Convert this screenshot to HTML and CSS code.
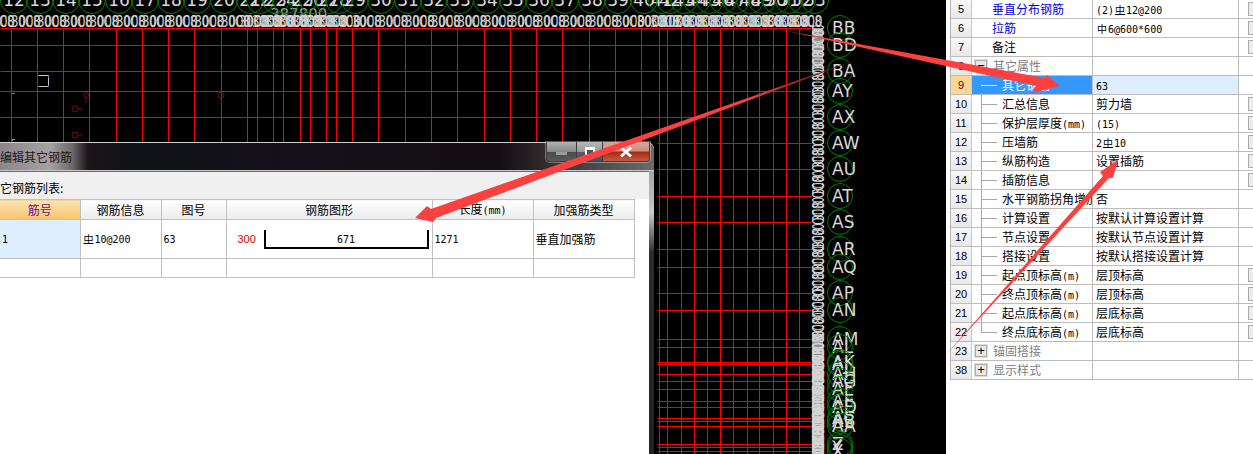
FILE: index.html
```html
<!DOCTYPE html>
<html lang="zh-CN">
<head>
  <meta charset="UTF-8">
  <title>编辑其它钢筋</title>
  <link rel="stylesheet" href="styles.css">
</head>
<body>
  <div class="screen">
    <div class="cad">
      <svg class="cad-drawing" id="drawing" width="946" height="454" xmlns="http://www.w3.org/2000/svg">
        <text class="dim-total" x="270" y="20">387800</text>
        <g id="axes"></g>
        <g fill="none" stroke="#7a0d0d">
          <circle cx="86" cy="95" r="2.5"/><path d="M86 98v5"/>
          <circle cx="221" cy="95" r="3"/><path d="M221 98v5"/>
          <circle cx="75" cy="109" r="3"/><path d="M78 109h5"/>
          <circle cx="75" cy="135" r="3"/><path d="M78 135h5"/>
        </g>
        <path d="M38.5 75.5h10v11h-10" fill="none" stroke="#c8c8c8"/>
        <path d="M48 76h1v2h-1zM48 85h1v2h-1zM12 93h3v1h-3z" fill="#8a5cf0"/>
        <path d="M12 139h3v1h-3zM12 139h1v2h-1z" fill="#999"/>
      </svg>

      <section class="dialog">
        <div class="dialog-title">
          <span class="dialog-name">编辑其它钢筋</span>
          <div class="window-btns">
            <span class="win-btn win-min"><i></i></span>
            <span class="win-btn win-max"><i></i></span>
            <span class="win-btn win-close">
              <svg width="14" height="12" viewBox="0 0 14 12"><path d="M2 1.5l10 9M12 1.5l-10 9" stroke="#fff" stroke-width="3"/></svg>
            </span>
          </div>
        </div>
        <div class="dialog-body">
          <p class="list-label">它钢筋列表:</p>
          <table class="rebar-table">
            <colgroup>
              <col class="col-no"><col class="col-info"><col class="col-fig"><col class="col-shape"><col class="col-len"><col class="col-type">
            </colgroup>
            <thead>
              <tr>
                <th class="th-active">筋号</th>
                <th>钢筋信息</th>
                <th>图号</th>
                <th>钢筋图形</th>
                <th>长度<span class="latin">(mm)</span></th>
                <th>加强筋类型</th>
              </tr>
            </thead>
            <tbody>
              <tr class="row-main">
                <td class="td-active"><span class="latin">1</span></td>
                <td><span class="bar-mark bar-grade3">中</span><span class="latin">10@200</span></td>
                <td><span class="latin">63</span></td>
                <td>
                  <div class="shape-cell">
                    <span class="shape-side">300</span>
                    <span class="shape-bar"><span class="latin">671</span></span>
                  </div>
                </td>
                <td><span class="latin">1271</span></td>
                <td>垂直加强筋</td>
              </tr>
              <tr class="row-empty"><td></td><td></td><td></td><td></td><td></td><td></td></tr>
            </tbody>
          </table>
        </div>
      </section>
    </div>

    <aside class="panel">
      <div class="props">
        <div class="prop">
          <span class="p-num">5</span><span class="p-name link">垂直分布钢筋</span>
          <span class="p-val"><span class="latin">(2)</span><span class="bar-mark bar-grade3">中</span><span class="latin">12@200</span></span><span class="p-btn"><i></i></span>
        </div>
        <div class="prop">
          <span class="p-num">6</span><span class="p-name link">拉筋</span>
          <span class="p-val"><span class="bar-mark">中</span><span class="latin">6@600*600</span></span><span class="p-btn"><i></i></span>
        </div>
        <div class="prop">
          <span class="p-num">7</span><span class="p-name">备注</span>
          <span class="p-val"></span><span class="p-btn"><i></i></span>
        </div>
        <div class="prop">
          <span class="p-num">8</span><span class="p-name group"><b class="toggle">−</b>其它属性</span>
          <span class="p-val"></span><span class="p-btn"></span>
        </div>
        <div class="prop prop-selected">
          <span class="p-num">9</span><span class="p-name leaf">其它钢筋</span>
          <span class="p-val"><span class="latin">63</span></span><span class="p-btn"></span>
        </div>
        <div class="prop">
          <span class="p-num">10</span><span class="p-name leaf">汇总信息</span>
          <span class="p-val">剪力墙</span><span class="p-btn"><i></i></span>
        </div>
        <div class="prop">
          <span class="p-num">11</span><span class="p-name leaf">保护层厚度<span class="latin">(mm)</span></span>
          <span class="p-val"><span class="latin">(15)</span></span><span class="p-btn"><i></i></span>
        </div>
        <div class="prop">
          <span class="p-num">12</span><span class="p-name leaf">压墙筋</span>
          <span class="p-val"><span class="latin">2</span><span class="bar-mark bar-grade3">中</span><span class="latin">10</span></span><span class="p-btn"><i></i></span>
        </div>
        <div class="prop">
          <span class="p-num">13</span><span class="p-name leaf">纵筋构造</span>
          <span class="p-val">设置插筋</span><span class="p-btn"><i></i></span>
        </div>
        <div class="prop">
          <span class="p-num">14</span><span class="p-name leaf">插筋信息</span>
          <span class="p-val"></span><span class="p-btn"><i></i></span>
        </div>
        <div class="prop">
          <span class="p-num">15</span><span class="p-name leaf">水平钢筋拐角增加</span>
          <span class="p-val">否</span><span class="p-btn"></span>
        </div>
        <div class="prop">
          <span class="p-num">16</span><span class="p-name leaf">计算设置</span>
          <span class="p-val">按默认计算设置计算</span><span class="p-btn"></span>
        </div>
        <div class="prop">
          <span class="p-num">17</span><span class="p-name leaf">节点设置</span>
          <span class="p-val">按默认节点设置计算</span><span class="p-btn"></span>
        </div>
        <div class="prop">
          <span class="p-num">18</span><span class="p-name leaf">搭接设置</span>
          <span class="p-val">按默认搭接设置计算</span><span class="p-btn"></span>
        </div>
        <div class="prop">
          <span class="p-num">19</span><span class="p-name leaf">起点顶标高<span class="latin">(m)</span></span>
          <span class="p-val">层顶标高</span><span class="p-btn"><i></i></span>
        </div>
        <div class="prop">
          <span class="p-num">20</span><span class="p-name leaf">终点顶标高<span class="latin">(m)</span></span>
          <span class="p-val">层顶标高</span><span class="p-btn"><i></i></span>
        </div>
        <div class="prop">
          <span class="p-num">21</span><span class="p-name leaf">起点底标高<span class="latin">(m)</span></span>
          <span class="p-val">层底标高</span><span class="p-btn"><i></i></span>
        </div>
        <div class="prop">
          <span class="p-num">22</span><span class="p-name leaf leaf-last">终点底标高<span class="latin">(m)</span></span>
          <span class="p-val">层底标高</span><span class="p-btn"><i></i></span>
        </div>
        <div class="prop">
          <span class="p-num">23</span><span class="p-name group"><b class="toggle">+</b>锚固搭接</span>
          <span class="p-val"></span><span class="p-btn"></span>
        </div>
        <div class="prop">
          <span class="p-num">38</span><span class="p-name group"><b class="toggle">+</b>显示样式</span>
          <span class="p-val"></span><span class="p-btn"></span>
        </div>
      </div>
    </aside>

    <!-- red arrows drawn on top of the screenshot -->
    <svg class="arrows" width="1253" height="454" xmlns="http://www.w3.org/2000/svg">
      <defs>
        <linearGradient id="fade" gradientUnits="userSpaceOnUse" x1="867" y1="56" x2="740" y2="100">
          <stop offset="0" stop-color="#3a0808"/>
          <stop offset="1" stop-color="#fb4040"/>
        </linearGradient>
      </defs>
      <polygon fill="#fb4040" points="787,31 1045,78 1047,75 1060,86 1032,93 1036,86"/>
      <polygon fill="url(#fade)" points="867,56 431,209 427,206 415,218 433,222 436,218"/>
      <polygon fill="#fb4040" points="943,358 1103,176 1100,172 1118,160 1113,178 1109,178"/>
    </svg>
  </div>
  <script src="canvas.js"></script>
</body>
</html>
```

FILE: styles.css
```css
html, body {
  margin: 0;
  padding: 0;
  background: #000;
}

body {
  font-family: "Noto Sans CJK SC", "Liberation Sans", sans-serif;
  font-size: 12px;
  color: #000;
}

.screen {
  position: relative;
  display: flex;
  width: 1253px;
  height: 454px;
  overflow: hidden;
}

.latin {
  font-family: "DejaVu Sans Mono", monospace;
  font-size: 10px;
}

/* bar grade mark */
.bar-mark {
  display: inline-block;
  width: 12px;
  font-size: 10px;
  text-align: center;
}

.bar-grade3 {
  text-decoration: underline;
  text-underline-offset: 0;
}

/* drawing area */
.cad {
  position: relative;
  flex: 0 0 946px;
  background: #000;
}

.cad-drawing {
  display: block;
}

.cad-drawing text {
  font-family: "DejaVu Sans", sans-serif;
}

.axis-no {
  font-size: 17px;
  fill: #d8d8d8;
}

.axis-letter {
  font-size: 17px;
  fill: #d8d8d8;
}

.dim {
  font-size: 16px;
  fill: #d4d4d4;
}

.dim-total {
  font-size: 15px;
  fill: #a0a0a0;
}

/* dialog window */
.dialog {
  position: absolute;
  left: 0;
  top: 142px;
  display: flex;
  flex-direction: column;
  width: 654px;
  height: 312px;
  background: linear-gradient(#8d8d8d 0, #c8c8c8 70px, #2c2c2c 110px, #222 100%);
  border-top: 1px solid #d0d0d0;
  border-radius: 0 7px 0 0;
  box-sizing: border-box;
}

.dialog-title {
  position: relative;
  flex: 0 0 27px;
  box-sizing: border-box;
  display: flex;
  align-items: center;
  background: linear-gradient(90deg, #8c8688 0, #a5a0a2 50px, #6d686a 72px, #1d1519 88px, #0e1116 130px, #15101a 300px, #140d12 500px, #3a3537 560px, #6b6b6b 654px);
  border-bottom: 1px solid #c9c9c9;
  border-radius: 0 7px 0 0;
}

.dialog-name {
  color: #1a1a1a;
  line-height: 27px;
}

.window-btns {
  position: absolute;
  top: -1px;
  right: 4px;
  display: flex;
  height: 19px;
  border: 1px solid #3e3e3e;
  border-top: 0;
  border-radius: 0 0 4px 4px;
  overflow: hidden;
  box-shadow: 0 0 0 1px rgba(255, 255, 255, 0.35);
}

.win-btn {
  display: flex;
  align-items: center;
  justify-content: center;
  box-sizing: border-box;
  height: 100%;
  border-left: 1px solid #3e3e3e;
}

.win-btn:first-child {
  border-left: 0;
}

.win-min {
  width: 29px;
  background: linear-gradient(#b2b2b2, #8a8a8a 50%, #4a4a4a 55%, #5a5a5a);
}

.win-min i {
  display: block;
  width: 11px;
  height: 3px;
  margin-top: 4px;
  background: #9a9a9a;
}

.win-max {
  width: 26px;
  background: linear-gradient(#b8b8b8, #9a9a9a 50%, #555a66 55%, #4c5260);
}

.win-max i {
  display: block;
  box-sizing: border-box;
  width: 10px;
  height: 10px;
  border: 2px solid #fff;
  border-top-width: 3px;
  background: #555;
}

.win-close {
  width: 47px;
  background: linear-gradient(#d8a49c, #cc8f80 45%, #a82c14 55%, #c45a44);
}

.dialog-body {
  flex: none;
  width: 649px;
  height: 400px;
  background: #fff;
  border-top: 1px solid #6a6a6a;
  box-sizing: border-box;
}

.list-label {
  margin: 0;
  height: 27px;
  line-height: 32px;
  background: #f0f0f0;
  white-space: nowrap;
}

.rebar-table {
  table-layout: fixed;
  width: 634px;
  border-collapse: collapse;
  background: #fff;
}

.col-no { width: 80px; }
.col-info { width: 81px; }
.col-fig { width: 65px; }
.col-shape { width: 206px; }
.col-len { width: 101px; }
.col-type { width: 101px; }

.rebar-table th,
.rebar-table td {
  padding: 0;
  border: 1px solid #c0c0c0;
  line-height: 16px;
  white-space: nowrap;
  overflow: hidden;
}

.rebar-table th:first-child,
.rebar-table td:first-child {
  border-left: 0;
}

.rebar-table th {
  height: 19px;
  font-weight: 400;
  text-align: center;
  background: linear-gradient(#fff, #ececec);
}

.rebar-table th.th-active {
  color: #6a0a8c;
  background: linear-gradient(#fde3b4, #f5c36c);
}

.rebar-table td {
  padding-left: 2px;
}

.rebar-table td.td-active {
  background: #deeefe;
}

.row-main td {
  height: 38px;
}

.row-empty td {
  height: 18px;
}

.shape-cell {
  display: flex;
  align-items: center;
  margin-left: 9px;
}

.shape-side {
  width: 26px;
  color: #e00000;
  font-family: "Liberation Sans", sans-serif;
  font-size: 11px;
}

.shape-bar {
  box-sizing: border-box;
  width: 165px;
  height: 19px;
  border: 2px solid #000;
  border-top: 0;
  text-align: center;
  line-height: 15px;
}

/* property list */
.panel {
  flex: 1;
  background: #fff;
  padding-left: 4px;
  overflow: hidden;
}

.props {
  border-left: 1px solid #b4b4b4;
}

.prop {
  display: flex;
  box-sizing: border-box;
  height: 19px;
  line-height: 18px;
  border-bottom: 1px solid #bcbcbc;
  white-space: nowrap;
}

.p-num {
  flex: 0 0 21px;
  box-sizing: border-box;
  border-right: 1px solid #c8c8c8;
  text-align: center;
  font-family: "Liberation Sans", sans-serif;
  font-size: 11px;
  background: linear-gradient(#f8f8f8, #e8e8e8);
}

.p-name {
  flex: 0 0 121px;
  box-sizing: border-box;
  padding-left: 20px;
  border-right: 1px solid #bcbcbc;
  overflow: hidden;
}

.p-name.link {
  color: #0000e0;
}

.p-name.group {
  display: flex;
  padding-left: 3px;
  color: #808080;
}

.toggle {
  flex: none;
  width: 10px;
  height: 10px;
  margin: 3px 6px 0 0;
  border: 1px solid #aaa;
  outline: 1px solid #ddd;
  background: #e8e8e8;
  color: #000;
  font-family: "Liberation Sans", sans-serif;
  font-weight: 400;
  font-size: 13px;
  line-height: 10px;
  text-align: center;
}

.p-name.leaf {
  padding-left: 30px;
  background:
    linear-gradient(#a8a8a8, #a8a8a8) no-repeat 9px 0 / 1px 100%,
    linear-gradient(#a8a8a8, #a8a8a8) no-repeat 9px 9px / 16px 1px;
}

.p-name.leaf-last {
  background:
    linear-gradient(#a8a8a8, #a8a8a8) no-repeat 9px 0 / 1px 10px,
    linear-gradient(#a8a8a8, #a8a8a8) no-repeat 9px 9px / 16px 1px;
}

.p-val {
  flex: 0 0 146px;
  box-sizing: border-box;
  padding-left: 3px;
  border-right: 1px solid #bcbcbc;
  overflow: hidden;
}

.p-btn {
  flex: 1;
  padding: 2px 0 0 9px;
}

.p-btn i {
  display: block;
  width: 12px;
  height: 12px;
  border: 1px solid #aaa;
  background: #ececec;
}

.prop-selected .p-num {
  color: #6a0000;
  background: #fdd594;
}

.prop-selected .p-name.leaf {
  color: #fff;
  background:
    linear-gradient(#cfe4ff, #cfe4ff) no-repeat 9px 9px / 16px 1px,
    #3399ff;
}

.prop-selected .p-val {
  background: #deeeff;
}

.arrows {
  position: absolute;
  left: 0;
  top: 0;
  pointer-events: none;
}
```

FILE: canvas.js
```js
// axis grid of the drawing, taken from the axis positions
var SVG = 'http://www.w3.org/2000/svg';
var axes = document.getElementById('axes');

var colX = [11, 37, 63, 89, 116, 142, 168, 194, 221, 247, 257, 273, 283, 300, 310, 326, 336, 352, 378, 405,
  431, 457, 484, 510, 536, 562, 589, 615, 641, 659, 667, 681, 694, 707, 720, 733, 747, 759, 773, 786, 799];
var topY = [28, 45, 71, 91, 117];
var sideRows = [[28, 'BB'], [45, 'BD'], [71, 'BA'], [91, 'AY'], [117, 'AX'], [143, 'AW'], [169, 'AU'], [196, 'AT'],
  [222, 'AS'], [249, 'AR'], [267, 'AQ'], [293, 'AP'], [310, 'AN'], [339, 'AM'], [347, 'AL'], [362, 'AK'],
  [364, 'AJ'], [374, 'AH'], [381, 'AG'], [389, 'AF'], [401, 'AE'], [407, 'AD'], [418, 'AC'], [421, 'AB'],
  [426, 'AA'], [444, 'Z'], [447, 'Y'], [451, 'X']];

function add(tag, attrs, text) {
  var el = document.createElementNS(SVG, tag);
  for (var k in attrs) el.setAttribute(k, attrs[k]);
  if (text) el.textContent = text;
  axes.appendChild(el);
  return el;
}

function line(x1, y1, x2, y2) {
  add('line', { x1: x1 + 0.5, y1: y1 + 0.5, x2: x2 + 0.5, y2: y2 + 0.5, stroke: '#f00', 'stroke-width': 1 });
}

// red axis lines
colX.forEach(function (x) { line(x, 28, x, 454); });
topY.forEach(function (y) { line(0, y, 811, y); });
sideRows.forEach(function (r) { if (r[0] > 117) line(657, r[0], 811, r[0]); });

// bubbles along the top edge with their numbers, clipped by the window edge
colX.forEach(function (x, i) {
  var no = i + 12;
  add('circle', { cx: x + 3, cy: 0, r: 13.5, fill: 'none', stroke: '#008000' });
  add('text', { class: 'axis-no', x: x + 3, y: 6, 'text-anchor': 'middle' }, String(no));
});
add('circle', { cx: 815, cy: 0, r: 13.5, fill: 'none', stroke: '#008000' });
add('text', { class: 'axis-no', x: 815, y: 6, 'text-anchor': 'middle' }, '53');

// overlapping bay dimensions on the top edge
var bays = colX.concat([812]);
for (var i = -1; i < bays.length - 1; i++) {
  var a = i < 0 ? -15 : bays[i];
  var mid = (a + bays[i + 1]) / 2;
  add('text', { class: 'dim', x: mid - 13, y: 27, textLength: 30, lengthAdjust: 'spacingAndGlyphs' }, '3000');
  add('text', { class: 'dim', x: mid - 6, y: 27, textLength: 22, lengthAdjust: 'spacingAndGlyphs' }, '0C8');
}

// grey strip on the right edge, where the dimension texts run together
add('rect', { x: 812, y: 28, width: 11, height: 40, fill: '#8c8c8c' });
add('rect', { x: 812, y: 335, width: 11, height: 119, fill: '#8c8c8c' });
for (var j = 0; j < sideRows.length - 1; j++) {
  var m = (sideRows[j][0] + sideRows[j + 1][0]) / 2;
  ['3000', '0C8'].forEach(function (t, n) {
    add('text', {
      class: 'dim', x: -12, y: 0, textLength: 24, lengthAdjust: 'spacingAndGlyphs',
      transform: 'translate(824 ' + (m + n * 4) + ') rotate(-90)'
    }, t);
  });
}

// bubbles and letters on the right edge
sideRows.forEach(function (r) {
  add('circle', { cx: 840, cy: r[0], r: 12.5, fill: 'none', stroke: '#008000' });
  add('text', { class: 'axis-letter', x: 832, y: r[0] + 6 }, r[1]);
});
```
